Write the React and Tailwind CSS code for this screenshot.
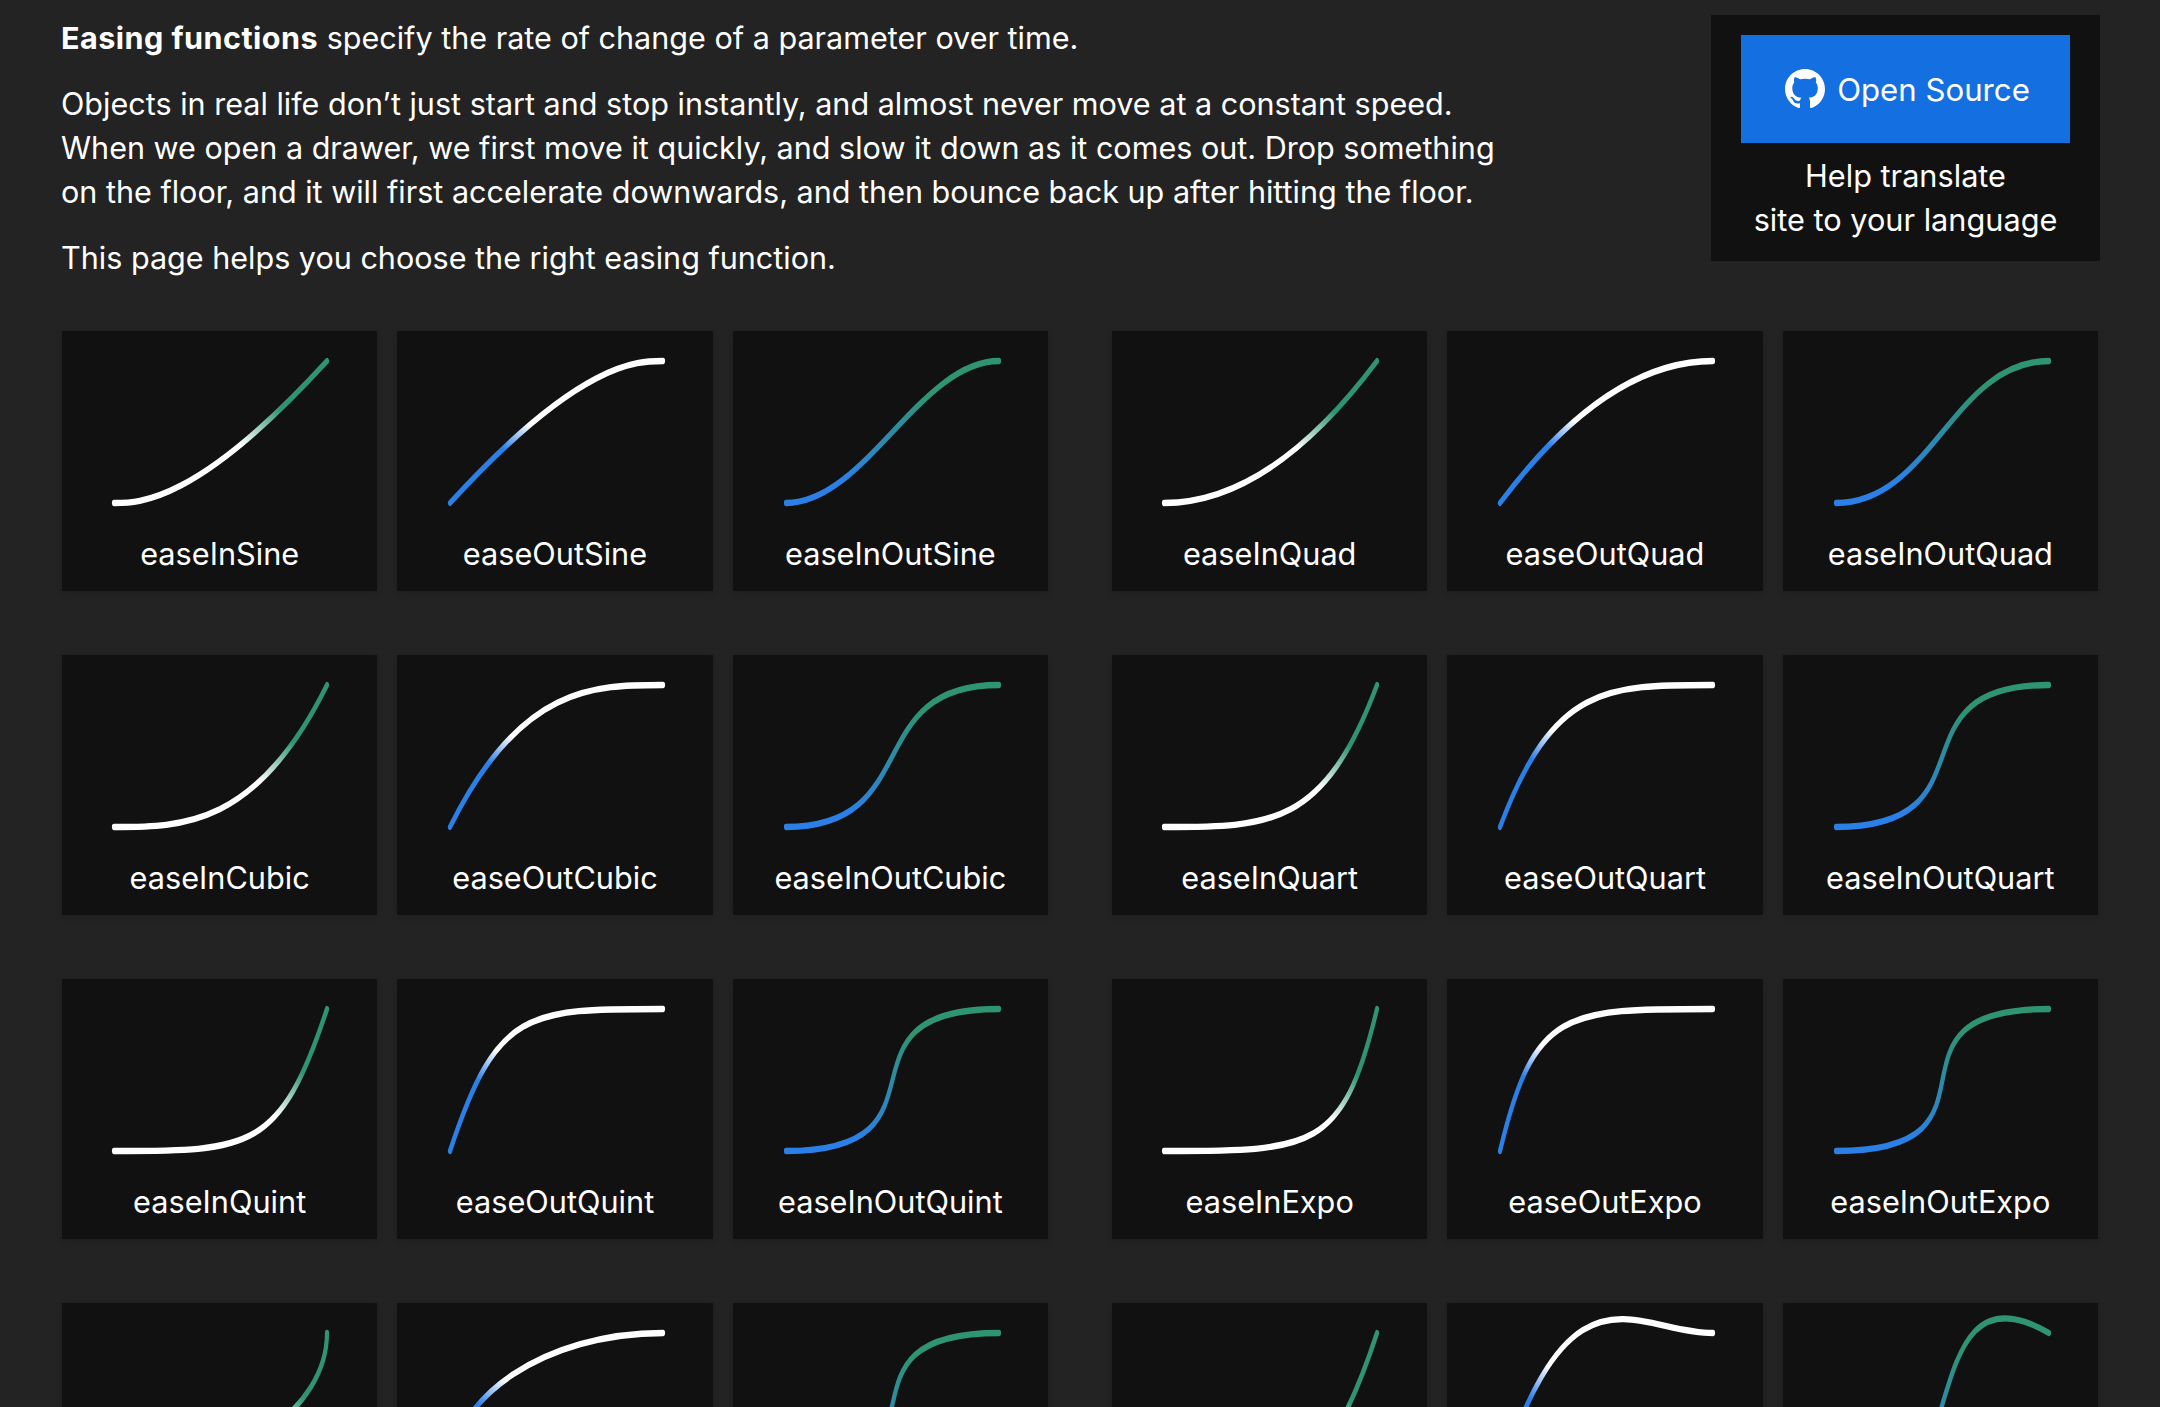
import React from 'react';

const rows = [
  ['Sine', [0.12, 0, 0.39, 0], [0.61, 1, 0.88, 1], [0.37, 0, 0.63, 1]],
  ['Quad', [0.11, 0, 0.5, 0], [0.5, 1, 0.89, 1], [0.45, 0, 0.55, 1]],
  ['Cubic', [0.32, 0, 0.67, 0], [0.33, 1, 0.68, 1], [0.65, 0, 0.35, 1]],
  ['Quart', [0.5, 0, 0.75, 0], [0.25, 1, 0.5, 1], [0.76, 0, 0.24, 1]],
  ['Quint', [0.64, 0, 0.78, 0], [0.22, 1, 0.36, 1], [0.83, 0, 0.17, 1]],
  ['Expo', [0.7, 0, 0.84, 0], [0.16, 1, 0.3, 1], [0.87, 0, 0.13, 1]],
  ['Circ', [0.55, 0, 1, 0.45], [0, 0.55, 0.45, 1], [0.85, 0, 0.15, 1]],
  ['Back', [0.36, 0, 0.66, -0.56], [0.34, 1.56, 0.64, 1], [0.68, -0.6, 0.32, 1.6]],
];

const groups = [
  ['Sine', 'Quad'],
  ['Cubic', 'Quart'],
  ['Quint', 'Expo'],
  ['Circ', 'Back'],
];

// squashed viewBox: the stroke comes out thicker on flat runs than on steep ones
const W = 213;
const H = 95;

const curveOffset = {
  in: 'ml-[1px]',
  out: 'ml-[4px]',
  inout: 'ml-[5px]',
};

const Curve = ({ id, kind, bez }) => {
  const [a, b, c, d] = bez;
  const path = `M0 ${H} C${a * W} ${H - b * H} ${c * W} ${H - d * H} ${W} 0`;
  return (
    <svg
      className={`block w-[213px] h-[142px] overflow-visible ${curveOffset[kind]}`}
      viewBox={`0 0 ${W} ${H}`}
      preserveAspectRatio="none"
      fill="none"
    >
      <defs>
        {/* diagonal, bottom-left to top-right */}
        <linearGradient id={id} x1="0" y1="1" x2="1" y2="0">
          {kind === 'in' && (
            <>
              <stop offset="0.5" stopColor="#ffffff" />
              <stop offset="0.72" stopColor="#2e9471" />
            </>
          )}
          {kind === 'out' && (
            <>
              <stop offset="0.315" stopColor="#2b80e8" />
              <stop offset="0.465" stopColor="#ffffff" />
            </>
          )}
          {kind === 'inout' && (
            <>
              <stop offset="0.2" stopColor="#2b80e8" />
              <stop offset="0.72" stopColor="#2e9471" />
            </>
          )}
        </linearGradient>
      </defs>
      <path d={path} stroke={`url(#${id})`} strokeWidth="4.2" strokeLinecap="round" />
    </svg>
  );
};

const Card = ({ name, kind, bez }) => (
  <div className="h-[260px] bg-[#111111] pt-[30px] flex flex-col items-center shadow-[0_2px_6px_rgba(0,0,0,0.15)]">
    <Curve id={name} kind={kind} bez={bez} />
    <div className="mt-[29px] text-[30.7px] leading-[44px] text-white">{name}</div>
  </div>
);

const Group = ({ row }) => {
  const [label, a, b, c] = rows.find((r) => r[0] === row);
  return (
    <div className="grid grid-cols-3 gap-x-[20px]">
      <Card name={`easeIn${label}`} kind="in" bez={a} />
      <Card name={`easeOut${label}`} kind="out" bez={b} />
      <Card name={`easeInOut${label}`} kind="inout" bez={c} />
    </div>
  );
};

const GithubMark = () => (
  <svg viewBox="0 0 16 16" className="w-[40px] h-[40px] fill-white" fillRule="evenodd">
    <path d="M8 0C3.58 0 0 3.58 0 8c0 3.54 2.29 6.53 5.47 7.59.4.07.55-.17.55-.38 0-.19-.01-.82-.01-1.49-2.01.37-2.53-.49-2.69-.94-.09-.23-.48-.94-.82-1.13-.28-.15-.68-.52-.01-.53.63-.01 1.08.58 1.23.82.72 1.21 1.87.87 2.33.66.07-.52.28-.87.51-1.07-1.78-.2-3.64-.89-3.64-3.95 0-.87.31-1.59.82-2.15-.08-.2-.36-1.02.08-2.12 0 0 .67-.21 2.2.82.64-.18 1.32-.27 2-.27.68 0 1.36.09 2 .27 1.53-1.04 2.2-.82 2.2-.82.44 1.1.16 1.92.08 2.12.51.56.82 1.27.82 2.15 0 3.07-1.87 3.75-3.65 3.95.29.25.54.73.54 1.48 0 1.07-.01 1.93-.01 2.2 0 .21.15.46.55.38A8.013 8.013 0 0016 8c0-4.42-3.58-8-8-8z" />
  </svg>
);

export default function App() {
  return (
    <div className="h-[1407px] overflow-hidden bg-[#232323] text-white font-['Inter',sans-serif] leading-[44px]">
      <header className="flex justify-between items-start pl-[61px] pr-[60px] pt-[15px]">
        <div className="pt-px w-[1520px] text-[30.55px]">
          <p>
            <strong className="font-bold tracking-[0.015em]">Easing functions</strong> specify the rate of change of a parameter over time.
          </p>
          <p className="mt-[22px]">
            Objects in real life don’t just start and stop instantly, and almost never move at a constant speed.
            <br />
            When we open a drawer, we first move it quickly, and slow it down as it comes out. Drop something
            <br />
            on the floor, and it will first accelerate downwards, and then bounce back up after hitting the floor.
          </p>
          <p className="mt-[22px]">This page helps you choose the right easing function.</p>
        </div>
        <aside className="w-[389px] h-[246px] bg-[#111111] px-[30px] pt-[20px] text-center text-[30.7px]">
          <a className="h-[108px] pl-[4px] bg-[#1470e0] flex items-center justify-center gap-[12px]">
            <GithubMark />
            <span className="text-[31.2px] pt-px">Open Source</span>
          </a>
          <p className="mt-[11px]">
            Help translate
            <br />
            site to your language
          </p>
        </aside>
      </header>
      <main className="pl-[62px] pr-[62px] mt-[51px] grid grid-cols-2 gap-x-[64px] gap-y-[64px]">
        {groups.map(([left, right]) => (
          <React.Fragment key={left}>
            <Group row={left} />
            <Group row={right} />
          </React.Fragment>
        ))}
      </main>
    </div>
  );
}
